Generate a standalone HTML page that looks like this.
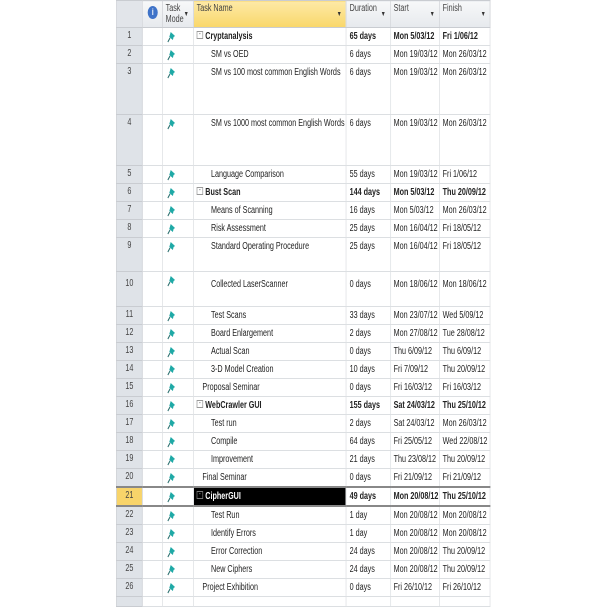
<!DOCTYPE html>
<html><head><meta charset="utf-8">
<style>
html,body{margin:0;padding:0;background:#fff;width:607px;height:599px;overflow:hidden}
table{position:absolute;left:116px;top:0;width:519.5px;transform:scaleX(0.72);transform-origin:0 0;border-collapse:collapse;table-layout:fixed;font-family:"Liberation Sans",sans-serif;font-size:10px;color:#222}
td{border:1px solid #dcdfe2;padding:1px 0 0 4px;vertical-align:top;white-space:nowrap;overflow:hidden;line-height:16px}
thead td{background:linear-gradient(#f7f8f9,#e6e9ed);color:#444;height:24px;line-height:11px;padding-top:2px;position:relative;border-color:#c9ccd1}
thead td.y{background:linear-gradient(#fde9a6,#f9d76a)}
td.n{background:#dfe3e8;text-align:center;padding:0;color:#444;border-color:#c9ccd1}
td.p{padding:3px 0 0 5px;line-height:0}
.ar{position:absolute;right:6px;bottom:7px;font-size:7px;color:#333}
b{font-weight:bold}
.l1{padding-left:12px}.l2{padding-left:24px}.s{padding-left:4px}
.bx{display:inline-block;width:7px;height:6px;border:1px solid #999;font-size:7px;line-height:5px;text-align:center;margin-right:3px;vertical-align:3px;color:#333}
tr.sel td{border-top:2px solid #888;border-bottom:2px solid #888}
</style></head><body>
<svg width="0" height="0" style="position:absolute"><defs><g id="pin"><path d="M6 1 L12 5 L10 6 L9 9 L4 6 Z" fill="#1fa9a6"/><path d="M5 7 L2 11" stroke="#2a6f6e" stroke-width="1.4"/></g></defs></svg>
<table>
<colgroup><col style="width:36.1px"><col style="width:27.8px"><col style="width:43.1px"><col style="width:212.5px"><col style="width:61.1px"><col style="width:68.1px"><col style="width:70.8px"></colgroup>
<thead><tr><td class="n" style="background:#e2e5ea"></td><td style="padding:0"><div style="width:14px;height:13px;border-radius:50%;background:#3f73c8;color:#fff;font-weight:bold;font-size:9px;text-align:center;line-height:13px;margin:5px 0 0 7px">i</div></td><td>Task<br>Mode<span class="ar">▼</span></td><td class="y">Task Name<span class="ar">▼</span></td><td>Duration<span class="ar">▼</span></td><td>Start<span class="ar">▼</span></td><td>Finish<span class="ar">▼</span></td></tr></thead>
<tbody>
<tr style="height:18px"><td class="n">1</td><td></td><td class="p"><svg width="13" height="12"><use href="#pin"/></svg></td><td class="s"><span class="bx">-</span><b>Cryptanalysis</b></td><td><b>65 days</b></td><td><b>Mon 5/03/12</b></td><td><b>Fri 1/06/12</b></td></tr>
<tr style="height:17px"><td class="n">2</td><td></td><td class="p"><svg width="13" height="12"><use href="#pin"/></svg></td><td class="l2">SM vs OED</td><td>6 days</td><td>Mon 19/03/12</td><td>Mon 26/03/12</td></tr>
<tr style="height:51px"><td class="n">3</td><td></td><td class="p"><svg width="13" height="12"><use href="#pin"/></svg></td><td class="l2">SM vs 100 most common English Words</td><td>6 days</td><td>Mon 19/03/12</td><td>Mon 26/03/12</td></tr>
<tr style="height:51px"><td class="n">4</td><td></td><td class="p"><svg width="13" height="12"><use href="#pin"/></svg></td><td class="l2">SM vs 1000 most common English Words</td><td>6 days</td><td>Mon 19/03/12</td><td>Mon 26/03/12</td></tr>
<tr style="height:18px"><td class="n">5</td><td></td><td class="p"><svg width="13" height="12"><use href="#pin"/></svg></td><td class="l2">Language Comparison</td><td>55 days</td><td>Mon 19/03/12</td><td>Fri 1/06/12</td></tr>
<tr style="height:18px"><td class="n">6</td><td></td><td class="p"><svg width="13" height="12"><use href="#pin"/></svg></td><td class="s"><span class="bx">-</span><b>Bust Scan</b></td><td><b>144 days</b></td><td><b>Mon 5/03/12</b></td><td><b>Thu 20/09/12</b></td></tr>
<tr style="height:18px"><td class="n">7</td><td></td><td class="p"><svg width="13" height="12"><use href="#pin"/></svg></td><td class="l2">Means of Scanning</td><td>16 days</td><td>Mon 5/03/12</td><td>Mon 26/03/12</td></tr>
<tr style="height:18px"><td class="n">8</td><td></td><td class="p"><svg width="13" height="12"><use href="#pin"/></svg></td><td class="l2">Risk Assessment</td><td>25 days</td><td>Mon 16/04/12</td><td>Fri 18/05/12</td></tr>
<tr style="height:34px"><td class="n">9</td><td></td><td class="p"><svg width="13" height="12"><use href="#pin"/></svg></td><td class="l2">Standard Operating Procedure</td><td>25 days</td><td>Mon 16/04/12</td><td>Fri 18/05/12</td></tr>
<tr style="height:35px"><td class="n" style="line-height:24px">10</td><td></td><td class="p"><svg width="13" height="12"><use href="#pin"/></svg></td><td class="l2" style="line-height:24px">Collected LaserScanner</td><td style="line-height:24px">0 days</td><td style="line-height:24px">Mon 18/06/12</td><td style="line-height:24px">Mon 18/06/12</td></tr>
<tr style="height:18px"><td class="n">11</td><td></td><td class="p"><svg width="13" height="12"><use href="#pin"/></svg></td><td class="l2">Test Scans</td><td>33 days</td><td>Mon 23/07/12</td><td>Wed 5/09/12</td></tr>
<tr style="height:18px"><td class="n">12</td><td></td><td class="p"><svg width="13" height="12"><use href="#pin"/></svg></td><td class="l2">Board Enlargement</td><td>2 days</td><td>Mon 27/08/12</td><td>Tue 28/08/12</td></tr>
<tr style="height:18px"><td class="n">13</td><td></td><td class="p"><svg width="13" height="12"><use href="#pin"/></svg></td><td class="l2">Actual Scan</td><td>0 days</td><td>Thu 6/09/12</td><td>Thu 6/09/12</td></tr>
<tr style="height:18px"><td class="n">14</td><td></td><td class="p"><svg width="13" height="12"><use href="#pin"/></svg></td><td class="l2">3-D Model Creation</td><td>10 days</td><td>Fri 7/09/12</td><td>Thu 20/09/12</td></tr>
<tr style="height:18px"><td class="n">15</td><td></td><td class="p"><svg width="13" height="12"><use href="#pin"/></svg></td><td class="l1">Proposal Seminar</td><td>0 days</td><td>Fri 16/03/12</td><td>Fri 16/03/12</td></tr>
<tr style="height:18px"><td class="n">16</td><td></td><td class="p"><svg width="13" height="12"><use href="#pin"/></svg></td><td class="s"><span class="bx">-</span><b>WebCrawler GUI</b></td><td><b>155 days</b></td><td><b>Sat 24/03/12</b></td><td><b>Thu 25/10/12</b></td></tr>
<tr style="height:18px"><td class="n">17</td><td></td><td class="p"><svg width="13" height="12"><use href="#pin"/></svg></td><td class="l2">Test run</td><td>2 days</td><td>Sat 24/03/12</td><td>Mon 26/03/12</td></tr>
<tr style="height:18px"><td class="n">18</td><td></td><td class="p"><svg width="13" height="12"><use href="#pin"/></svg></td><td class="l2">Compile</td><td>64 days</td><td>Fri 25/05/12</td><td>Wed 22/08/12</td></tr>
<tr style="height:18px"><td class="n">19</td><td></td><td class="p"><svg width="13" height="12"><use href="#pin"/></svg></td><td class="l2">Improvement</td><td>21 days</td><td>Thu 23/08/12</td><td>Thu 20/09/12</td></tr>
<tr style="height:18px"><td class="n">20</td><td></td><td class="p"><svg width="13" height="12"><use href="#pin"/></svg></td><td class="l1">Final Seminar</td><td>0 days</td><td>Fri 21/09/12</td><td>Fri 21/09/12</td></tr>
<tr class="sel" style="height:18px"><td class="n" style="background:#f8d46a">21</td><td></td><td class="p"><svg width="13" height="12"><use href="#pin"/></svg></td><td class="s" style="background:#000;color:#fff"><span class="bx" style="border-color:#777;color:#ccc">-</span><b>CipherGUI</b></td><td><b>49 days</b></td><td><b>Mon 20/08/12</b></td><td><b>Thu 25/10/12</b></td></tr>
<tr style="height:18px"><td class="n">22</td><td></td><td class="p"><svg width="13" height="12"><use href="#pin"/></svg></td><td class="l2">Test Run</td><td>1 day</td><td>Mon 20/08/12</td><td>Mon 20/08/12</td></tr>
<tr style="height:18px"><td class="n">23</td><td></td><td class="p"><svg width="13" height="12"><use href="#pin"/></svg></td><td class="l2">Identify Errors</td><td>1 day</td><td>Mon 20/08/12</td><td>Mon 20/08/12</td></tr>
<tr style="height:18px"><td class="n">24</td><td></td><td class="p"><svg width="13" height="12"><use href="#pin"/></svg></td><td class="l2">Error Correction</td><td>24 days</td><td>Mon 20/08/12</td><td>Thu 20/09/12</td></tr>
<tr style="height:18px"><td class="n">25</td><td></td><td class="p"><svg width="13" height="12"><use href="#pin"/></svg></td><td class="l2">New Ciphers</td><td>24 days</td><td>Mon 20/08/12</td><td>Thu 20/09/12</td></tr>
<tr style="height:18px"><td class="n">26</td><td></td><td class="p"><svg width="13" height="12"><use href="#pin"/></svg></td><td class="l1">Project Exhibition</td><td>0 days</td><td>Fri 26/10/12</td><td>Fri 26/10/12</td></tr>
<tr style="height:10px"><td class="n"></td><td></td><td></td><td></td><td></td><td></td><td></td></tr>
</tbody></table>
</body></html>
